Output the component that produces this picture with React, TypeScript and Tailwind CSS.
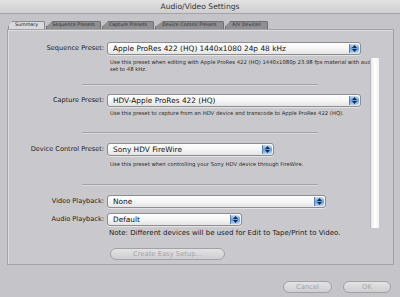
import React from "react";

const F = { fontFamily: '"DejaVu Sans", "Liberation Sans", sans-serif' };

function Stepper() {
  return (
    <div className="absolute right-[1px] top-[1px] bottom-[1px] w-[10px] rounded-r-[3px] bg-gradient-to-b from-[#c4dcf7] via-[#6a9fe0] to-[#b0d2f7] border-l border-[#5a83b8] flex flex-col items-center justify-center gap-[1px]">
      <svg width="5" height="3" viewBox="0 0 5 3"><path d="M0 3 L2.5 0 L5 3Z" fill="#1c2a40" /></svg>
      <svg width="5" height="3" viewBox="0 0 5 3"><path d="M0 0 L2.5 3 L5 0Z" fill="#1c2a40" /></svg>
    </div>
  );
}

function Popup({ text, w }: { text: string; w: string }) {
  return (
    <div className={`relative h-[13px] ${w} rounded-[3px] border border-[#8d8d8d] bg-gradient-to-b from-[#ffffff] via-[#f6f6f6] to-[#e4e4e4] shadow-[0_1px_0_rgba(255,255,255,0.5)]`}>
      <div className="absolute left-[5px] top-0 h-full flex items-center text-[7.4px] text-[#111] whitespace-nowrap leading-none">{text}</div>
      <Stepper />
    </div>
  );
}

function Row({ label, children }: { label: string; children: React.ReactNode }) {
  return (
    <div className="flex items-center">
      <div className="w-[99px] pr-[3px] text-right text-[6.6px] text-[#1b1b1b] whitespace-nowrap leading-none">{label}</div>
      {children}
    </div>
  );
}

function Desc({ children }: { children: React.ReactNode }) {
  return <div className="ml-[102px] text-[5.3px] leading-[7px] text-[#2a2a2a] whitespace-nowrap">{children}</div>;
}

function Sep() {
  return <div className="ml-[74px] w-[236px] h-[2px] border-t border-[#a3a3a7] border-b border-b-[#dadade]" />;
}

function Tab({ label, w, active }: { label: string; w: string; active?: boolean }) {
  return (
    <div
      className={`${w} h-[8px] mr-[1px] flex items-center justify-center text-[4.8px] leading-none whitespace-nowrap rounded-t-[2px] border border-b-0 ${
        active ? "bg-[#d9d9dc] border-[#8a8a8a] text-[#222] z-10" : "bg-[#8f8f92] border-[#6f6f72] text-[#2c2c2c]"
      } [clip-path:polygon(12%_0,100%_0,100%_100%,0_100%,0_70%)]`}
    >
      {label}
    </div>
  );
}

function PillButton({ label, w, disabled }: { label: string; w: string; disabled?: boolean }) {
  return (
    <div className={`${w} h-[12px] rounded-full border border-[#a2a2a6] bg-gradient-to-b from-[#e3e3e6] to-[#cfcfd2] flex items-center justify-center text-[6.8px] leading-none ${disabled ? "text-[#a3a3a6]" : "text-[#444]"}`}>
      {label}
    </div>
  );
}

export default function App() {
  return (
    <div className="w-[400px] h-[297px] bg-[#c5c5c9] overflow-hidden relative" style={F}>
      <div className="h-[14px] bg-gradient-to-b from-[#e2e2e2] to-[#cfcfd1] border-b border-[#a5a5a8] flex items-center justify-center text-[7.6px] text-[#333] leading-none">
        Audio/Video Settings
      </div>
      <div className="flex pl-[8px] mt-[7px] h-[8px] items-end">
        <Tab label="Summary" w="w-[37px]" active />
        <Tab label="Sequence Presets" w="w-[55px]" />
        <Tab label="Capture Presets" w="w-[52px]" />
        <Tab label="Device Control Presets" w="w-[69px]" />
        <Tab label="A/V Devices" w="w-[43px]" />
      </div>
      <div className="relative ml-[7px] w-[387px] h-[236px] border border-[#a4a4a8] bg-[#c9c9cd] shadow-[inset_1px_1px_0_#dcdce0]">
        <div className="pt-[12px]">
          <Row label="Sequence Preset:">
            <Popup text="Apple ProRes 422 (HQ) 1440x1080 24p 48 kHz" w="w-[254px]" />
          </Row>
          <div className="mt-[4px]">
            <Desc>
              Use this preset when editing with Apple ProRes 422 (HQ) 1440x1080p 23.98 fps material with audio
              <br />
              set to 48 kHz.
            </Desc>
          </div>
          <div className="mt-[11px]"><Sep /></div>
          <div className="mt-[8px]">
            <Row label="Capture Preset:">
              <Popup text="HDV-Apple ProRes 422 (HQ)" w="w-[254px]" />
            </Row>
          </div>
          <div className="mt-[3px]">
            <Desc>Use this preset to capture from an HDV device and transcode to Apple ProRes 422 (HQ).</Desc>
          </div>
          <div className="mt-[15px]"><Sep /></div>
          <div className="mt-[9px]">
            <Row label="Device Control Preset:">
              <Popup text="Sony HDV FireWire" w="w-[167px]" />
            </Row>
          </div>
          <div className="mt-[5px]">
            <Desc>Use this preset when controlling your Sony HDV device through FireWire.</Desc>
          </div>
          <div className="mt-[16px]"><Sep /></div>
          <div className="mt-[9px]">
            <Row label="Video Playback:">
              <Popup text="None" w="w-[219px]" />
            </Row>
          </div>
          <div className="mt-[5px]">
            <Row label="Audio Playback:">
              <Popup text="Default" w="w-[135px]" />
            </Row>
          </div>
          <div className="mt-[3px] ml-[101px] text-[7px] leading-[8px] text-[#1b1b1b] whitespace-nowrap">
            Note: Different devices will be used for Edit to Tape/Print to Video.
          </div>
          <div className="mt-[11px] ml-[102px]">
            <PillButton label="Create Easy Setup..." w="w-[115px]" disabled />
          </div>
        </div>
        <div className="absolute left-[362px] top-[28px] w-[9px] h-[170px] bg-gradient-to-r from-[#e9e9ec] via-[#ffffff] to-[#f2f2f4] border-l border-[#b8b8bc]" />
      </div>
      <div className="flex justify-end gap-[11px] pr-[9px] mt-[16px]">
        <PillButton label="Cancel" w="w-[49px]" disabled />
        <PillButton label="OK" w="w-[48px]" disabled />
      </div>
    </div>
  );
}
